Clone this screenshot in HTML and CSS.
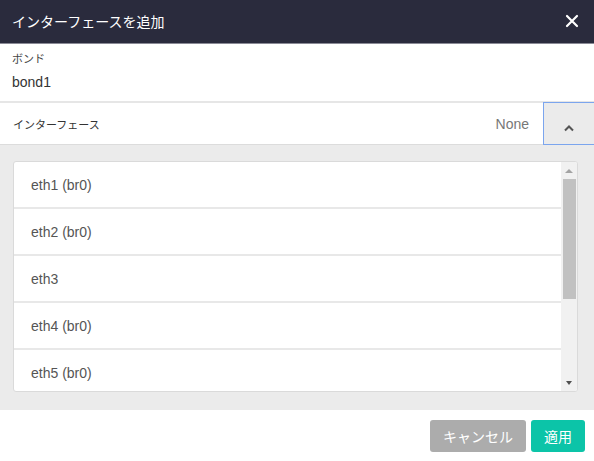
FILE: index.html
```html
<!DOCTYPE html>
<html lang="ja">
<head>
<meta charset="utf-8">
<link rel="stylesheet" href="styles.css">
</head>
<body>
<div class="dialog">
  <div class="header">
    <span class="title">インターフェースを追加</span>
    <svg class="close" width="14" height="14" viewBox="0 0 14 14"><path d="M2 2 L12 12 M12 2 L2 12" stroke="#fff" stroke-width="2.2" stroke-linecap="round"/></svg>
  </div>
  <div class="bond">
    <div class="label">ボンド</div>
    <div class="value">bond1</div>
  </div>
  <div class="iface-row">
    <span class="iface-label">インターフェース</span>
    <span class="none">None</span>
    <div class="toggle">
      <svg width="12" height="8" viewBox="0 0 12 8"><path d="M2 6.5 L6 2.5 L10 6.5" stroke="#555" stroke-width="2" fill="none"/></svg>
    </div>
  </div>
  <div class="panel">
    <div class="list">
      <div class="items">
        <div class="item">eth1 (br0)</div>
        <div class="item">eth2 (br0)</div>
        <div class="item">eth3</div>
        <div class="item">eth4 (br0)</div>
        <div class="item">eth5 (br0)</div>
      </div>
      <div class="scrollbar">
        <div class="arrow"><span class="tri-up"></span></div>
        <div class="thumb"></div>
        <div class="spacer"></div>
        <div class="arrow"><span class="tri-down"></span></div>
      </div>
    </div>
  </div>
  <div class="footer">
    <button class="btn cancel">キャンセル</button>
    <button class="btn apply">適用</button>
  </div>
</div>
</body>
</html>
```
FILE: styles.css
```css
* { box-sizing: border-box; }
html, body { margin: 0; padding: 0; }
body {
  width: 594px;
  height: 461px;
  font-family: "Liberation Sans", Arial, "Noto Sans CJK JP", sans-serif;
  background: #fff;
  overflow: hidden;
}
.dialog { display: flex; flex-direction: column; height: 461px; }
.header {
  height: 44px;
  background: #2a2b3d;
  border-bottom: 1px solid #8a8a96;
  display: flex;
  align-items: center;
  justify-content: space-between;
  padding: 0 15px 2px 12px;
}
.title { color: #fff; font-size: 14px; }
.close { display: block; }
.bond {
  height: 59px;
  padding: 8px 12px 0;
  border-bottom: 2px solid #e6e6e6;
}
.label { font-size: 11px; color: #444; line-height: 14px; }
.value { font-size: 14px; color: #333; line-height: 18px; margin-top: 7px; }
.iface-row {
  height: 42px;
  display: flex;
  align-items: center;
  border-bottom: 1px solid #dcdcdc;
  padding-left: 13px;
}
.iface-label { font-size: 11px; color: #333; flex: 1; padding-top: 1px; }
.none { font-size: 14px; color: #777; margin-right: 14px; padding-top: 1px; }
.toggle {
  width: 51px;
  height: 43px;
  align-self: flex-start;
  margin-top: -1px;
  background: #ebebeb;
  border: 1px solid #7ba5ee;
  border-right: none;
  display: flex;
  align-items: center;
  justify-content: center;
  padding-top: 9px;
}
.toggle svg { display: block; }
.panel {
  height: 265px;
  background: #ebebeb;
  padding: 16px 16px 18px 13px;
}
.list {
  height: 231px;
  background: #fff;
  border: 1px solid #dadada;
  border-radius: 3px;
  overflow: hidden;
  display: flex;
}
.items { flex: 1; overflow: hidden; }
.item {
  height: 47px;
  border-bottom: 2px solid #e8e8e8;
  padding-left: 17px;
  display: flex;
  align-items: center;
  font-size: 14px;
  color: #555;
}
.scrollbar {
  width: 16px;
  background: #f1f1f1;
  display: flex;
  flex-direction: column;
}
.arrow {
  height: 17px;
  display: flex;
  align-items: center;
  justify-content: center;
}
.tri-up {
  width: 0; height: 0;
  border-left: 4px solid transparent;
  border-right: 4px solid transparent;
  border-bottom: 4px solid #a3a3a3;
}
.tri-down {
  width: 0; height: 0;
  border-left: 3px solid transparent;
  border-right: 3px solid transparent;
  border-top: 4px solid #505050;
}
.thumb {
  height: 120px;
  margin: 0 1px 0 2px;
  background: #c1c1c1;
}
.spacer { flex: 1; }
.footer {
  flex: 1;
  display: flex;
  justify-content: flex-end;
  align-items: flex-start;
  gap: 5px;
  padding: 10px 9px 0 0;
}
.btn {
  height: 32px;
  border: none;
  border-radius: 3px;
  color: #fff;
  font-family: inherit;
  font-size: 14px;
  padding: 0;
}
.cancel { width: 96px; background: #acacac; }
.apply { width: 54px; background: #0cc4a8; }
```
